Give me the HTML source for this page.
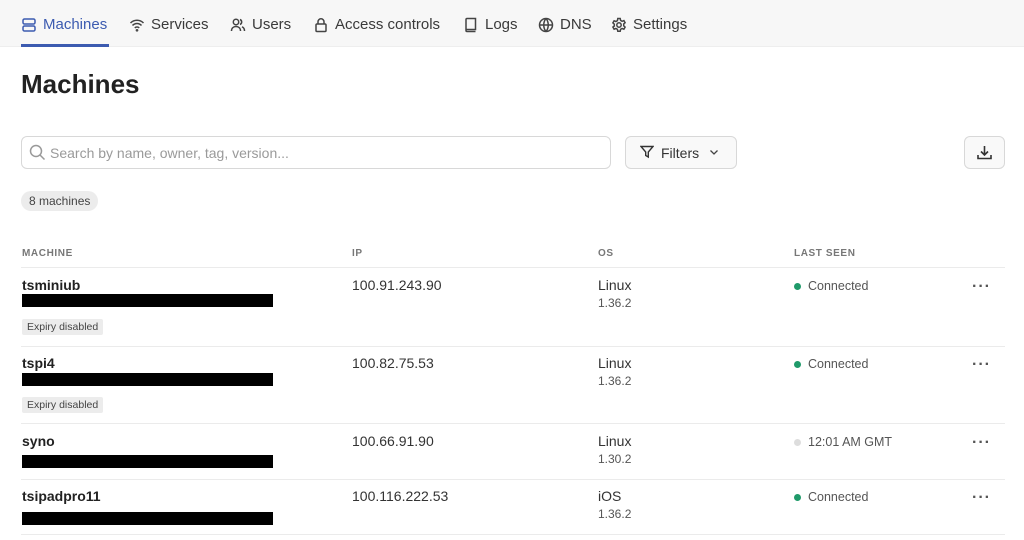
<!DOCTYPE html>
<html><head><meta charset="utf-8"><style>
*{margin:0;padding:0;box-sizing:border-box}
body{width:1024px;height:540px;background:#fff;font-family:"Liberation Sans",sans-serif;color:#222;position:relative;overflow:hidden}
.a{position:absolute;white-space:nowrap}
.nav{position:absolute;left:0;top:0;width:1024px;height:47px;background:#f7f7f7;border-bottom:1px solid #eee}
.ni{position:absolute;top:16px;font-size:15px;color:#3a3a3a;display:flex;align-items:center;gap:6px}
.ni svg{width:16px;height:16px;fill:none;stroke:#444;stroke-width:1.5}
.hd{font-size:10px;font-weight:bold;color:#777;letter-spacing:.6px;top:248px}
.line{position:absolute;left:21px;width:984px;height:1px;background:#ebebeb}
.nm{font-size:14px;font-weight:bold;color:#222}
.bar{position:absolute;left:22px;width:251px;height:13px;background:#000}
.tag{position:absolute;left:22px;height:16px;padding:0 5px;background:#ececec;font-size:10.5px;line-height:16px;color:#444;border-radius:2px}
.ip{font-size:14px;color:#333}
.os{font-size:14px;color:#333}
.ver{font-size:12px;color:#555}
.ls{font-size:12.5px;color:#555;display:flex;align-items:center;gap:7px}
.dot{width:7px;height:7px;border-radius:50%;background:#1f9a6a}
.more{font-size:16px;color:#555;letter-spacing:1px;font-weight:bold}
</style></head><body>
<div class="nav">
<div class="ni" style="left:21px;color:#3c5bb0"><svg viewBox="0 0 16 16" style="stroke:#3c5bb0"><rect x="2" y="2" width="12" height="5" rx="1.5"/><rect x="2" y="9" width="12" height="5" rx="1.5"/></svg>Machines</div>
<div style="position:absolute;left:21px;top:44px;width:88px;height:3px;background:#3c5bb0"></div>
<div class="ni" style="left:129px"><svg viewBox="0 0 16 16"><path d="M1.5 6a9 9 0 0 1 13 0M3.5 8.5a6 6 0 0 1 9 0M5.8 11a3 3 0 0 1 4.4 0"/><circle cx="8" cy="13.3" r=".6"/></svg>Services</div>
<div class="ni" style="left:230px"><svg viewBox="0 0 16 16"><circle cx="6" cy="5" r="2.7"/><path d="M1.5 14c0-3 2-4.5 4.5-4.5s4.5 1.5 4.5 4.5M10 2.5a2.7 2.7 0 0 1 0 5M12 9.8c1.5.6 2.5 2 2.5 4.2"/></svg>Users</div>
<div class="ni" style="left:313px"><svg viewBox="0 0 16 16"><rect x="3" y="7" width="10" height="7.5" rx="1"/><path d="M5 7V4.8a3 3 0 0 1 6 0V7"/></svg>Access controls</div>
<div class="ni" style="left:463px"><svg viewBox="0 0 16 16"><path d="M3 2.5a1 1 0 0 1 1-1h8.5v11H4a1 1 0 0 0-1 1zM3 13.5a1 1 0 0 0 1 1h8.5"/></svg>Logs</div>
<div class="ni" style="left:538px"><svg viewBox="0 0 16 16"><circle cx="8" cy="8" r="6.5"/><path d="M1.5 8h13M8 1.5c-3 3.5-3 9.5 0 13M8 1.5c3 3.5 3 9.5 0 13"/></svg>DNS</div>
<div class="ni" style="left:611px"><svg viewBox="0 0 16 16"><circle cx="8" cy="8" r="2.2"/><path d="M6.8 1.5h2.4l.4 1.9 1.5.9 1.8-.7 1.2 2.1-1.4 1.3v1.8l1.4 1.3-1.2 2.1-1.8-.7-1.5.9-.4 1.9H6.8l-.4-1.9-1.5-.9-1.8.7-1.2-2.1L3.3 9V7.2L1.9 5.9l1.2-2.1 1.8.7 1.5-.9z"/></svg>Settings</div>
</div>
<div class="a" style="left:21px;top:69px;font-size:26px;font-weight:bold;color:#222">Machines</div>
<div class="a" style="left:21px;top:136px;width:590px;height:33px;border:1px solid #d8d8d8;border-radius:6px"></div>
<svg class="a" style="left:29px;top:144px" width="17" height="17" viewBox="0 0 17 17" fill="none" stroke="#999" stroke-width="1.5"><circle cx="7" cy="7" r="5.5"/><path d="M11 11l4.5 4.5"/></svg>
<div class="a" style="left:50px;top:145px;font-size:14px;color:#9a9a9a">Search by name, owner, tag, version...</div>
<div class="a" style="left:625px;top:136px;width:112px;height:33px;border:1px solid #d8d8d8;border-radius:6px;background:#f9f9f9"></div>
<svg class="a" style="left:640px;top:145px" width="14" height="14" viewBox="0 0 14 14" fill="none" stroke="#333" stroke-width="1.4"><path d="M1 1.5h12L8.3 7v5l-2.6-1.5V7z"/></svg>
<div class="a" style="left:661px;top:145px;font-size:14px;color:#333">Filters</div>
<svg class="a" style="left:709px;top:148px" width="10" height="8" viewBox="0 0 10 8" fill="none" stroke="#444" stroke-width="1.3"><path d="M1.5 2.5L5 6l3.5-3.5"/></svg>
<div class="a" style="left:964px;top:136px;width:41px;height:33px;border:1px solid #d8d8d8;border-radius:6px;background:#f9f9f9"></div>
<svg class="a" style="left:976px;top:144px" width="17" height="17" viewBox="0 0 17 17" fill="none" stroke="#333" stroke-width="1.6"><path d="M8.5 2v9M5 7.5l3.5 3.5L12 7.5M2 11v3.5h13V11"/></svg>
<div class="a" style="left:21px;top:191px;height:20px;padding:0 8px;border-radius:10px;background:#ececec;font-size:12px;line-height:20px;color:#444">8 machines</div>
<div class="a hd" style="left:22px">MACHINE</div>
<div class="a hd" style="left:352px">IP</div>
<div class="a hd" style="left:598px">OS</div>
<div class="a hd" style="left:794px">LAST SEEN</div>
<div class="line" style="top:267px"></div>
<div class="line" style="top:346px"></div>
<div class="line" style="top:423px"></div>
<div class="line" style="top:479px"></div>
<div class="line" style="top:534px"></div>

<div class="a nm" style="left:22px;top:277px">tsminiub</div>
<div class="bar" style="top:294px"></div>
<div class="tag" style="top:319px">Expiry disabled</div>
<div class="a ip" style="left:352px;top:277px">100.91.243.90</div>
<div class="a os" style="left:598px;top:277px">Linux</div>
<div class="a ver" style="left:598px;top:296px">1.36.2</div>
<div class="a ls" style="left:794px;top:279px"><span class="dot"></span>Connected</div>
<div class="a more" style="left:972px;top:278px">···</div>

<div class="a nm" style="left:22px;top:355px">tspi4</div>
<div class="bar" style="top:373px"></div>
<div class="tag" style="top:397px">Expiry disabled</div>
<div class="a ip" style="left:352px;top:355px">100.82.75.53</div>
<div class="a os" style="left:598px;top:355px">Linux</div>
<div class="a ver" style="left:598px;top:374px">1.36.2</div>
<div class="a ls" style="left:794px;top:357px"><span class="dot"></span>Connected</div>
<div class="a more" style="left:972px;top:356px">···</div>

<div class="a nm" style="left:22px;top:433px">syno</div>
<div class="bar" style="top:455px"></div>
<div class="a ip" style="left:352px;top:433px">100.66.91.90</div>
<div class="a os" style="left:598px;top:433px">Linux</div>
<div class="a ver" style="left:598px;top:452px">1.30.2</div>
<div class="a ls" style="left:794px;top:435px"><span class="dot" style="background:#ddd"></span>12:01 AM GMT</div>
<div class="a more" style="left:972px;top:434px">···</div>

<div class="a nm" style="left:22px;top:488px">tsipadpro11</div>
<div class="bar" style="top:512px"></div>
<div class="a ip" style="left:352px;top:488px">100.116.222.53</div>
<div class="a os" style="left:598px;top:488px">iOS</div>
<div class="a ver" style="left:598px;top:507px">1.36.2</div>
<div class="a ls" style="left:794px;top:490px"><span class="dot"></span>Connected</div>
<div class="a more" style="left:972px;top:489px">···</div>
</body></html>
